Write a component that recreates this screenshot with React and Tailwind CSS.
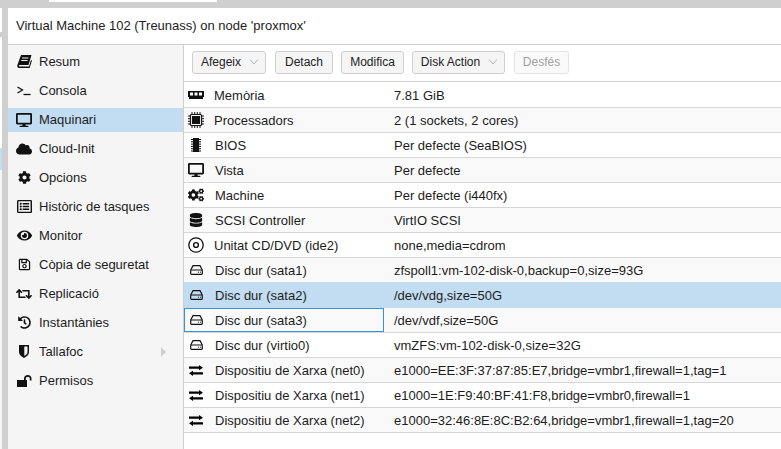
import React from 'react';
import {
  FaDesktop,
  FaCloud,
  FaCog,
  FaCogs,
  FaRegListAlt,
  FaEye,
  FaRegSave,
  FaRetweet,
  FaHistory,
  FaDatabase,
} from 'react-icons/fa';

const Chevron = () => (
  <svg width="10" height="6" viewBox="0 0 10 6" fill="none" stroke="#b5b5b5" strokeWidth="1">
    <path d="M1 0.5 L5 5 L9 0.5" />
  </svg>
);

const Book = () => (
  <svg width="15" height="13" viewBox="0 0 15 13" fill="#111">
    <path d="M4 0 H14.5 L11.5 10 H2.5 C1.8 10 1.8 11.5 2.6 11.5 H12 L14 5 L15 5.5 L12.6 13 H2 C0.5 13 0 11.5 0.4 10 Z" />
    <path d="M5.2 2.5 H11.5 L11.2 3.5 H4.9 Z M4.4 5 H10.7 L10.4 6 H4.1 Z" fill="#f5f5f5" />
  </svg>
);

const Terminal = () => (
  <svg width="14" height="11" viewBox="0 0 14 11" fill="none" stroke="#111" strokeWidth="1.3">
    <path d="M0.5 2 L5.5 5 L0.5 8" />
    <path d="M6.5 9.5 H13.5" />
  </svg>
);

const Shield = () => (
  <svg width="10" height="13" viewBox="0 0 10 13">
    <path d="M0 0 H10 V7 C10 10 7 12 5 13 C3 12 0 10 0 7 Z" fill="#111" />
    <path d="M5.3 1.5 H8.5 V7 C8.5 8.8 7 10.2 5.3 11 Z" fill="#f5f5f5" />
  </svg>
);

const Unlock = () => (
  <svg width="15" height="12" viewBox="0 0 15 12">
    <path d="M7 5 V3.5 C7 1.5 8.8 0 10.8 0 C12.8 0 14.5 1.5 14.5 3.5 V5.5 H12.8 V3.5 C12.8 2.4 11.9 1.7 10.8 1.7 C9.7 1.7 8.8 2.4 8.8 3.5 V5 H10 V12 H0 V5 Z" fill="#111" />
  </svg>
);

const Memory = () => (
  <svg width="16" height="8" viewBox="0 0 16 8">
    <path d="M0 0 H16 V6 H15 V8 H1 V6 H0 Z" fill="#111" />
    <path d="M2 1.5 H5 V4.5 H2 Z M6.5 1.5 H9.5 V4.5 H6.5 Z M11 1.5 H14 V4.5 H11 Z" fill="#fff" />
  </svg>
);

const Cpu = () => (
  <svg width="16" height="16" viewBox="0 0 16 16">
    <path
      d="M4 0 V16 M6.7 0 V16 M9.3 0 V16 M12 0 V16 M0 4 H16 M0 6.7 H16 M0 9.3 H16 M0 12 H16"
      stroke="#111"
      strokeWidth="1"
    />
    <rect x="2.5" y="2.5" width="11" height="11" rx="1" fill="#fff" stroke="#111" strokeWidth="1.2" />
    <rect x="4" y="4" width="8" height="8" fill="#111" />
  </svg>
);

const Chip = () => (
  <svg width="10" height="14" viewBox="0 0 10 14">
    <path d="M0 1.5 H10 M0 3.8 H10 M0 6.1 H10 M0 8.4 H10 M0 10.7 H10 M0 13 H10" stroke="#111" strokeWidth="1" />
    <rect x="2" y="0" width="6" height="14" fill="#111" />
  </svg>
);

const Disc = () => (
  <svg width="16" height="16" viewBox="0 0 16 16" fill="none" stroke="#111">
    <circle cx="8" cy="8" r="7.2" strokeWidth="1.3" />
    <circle cx="8" cy="8" r="2.4" strokeWidth="1.4" />
  </svg>
);

const Hdd = () => (
  <svg width="13" height="10" viewBox="0 0 13 10" fill="none" stroke="#111" strokeWidth="1.2">
    <path d="M0.7 5 L3 0.7 H10 L12.3 5" />
    <rect x="0.7" y="5" width="11.6" height="4.3" rx="0.8" />
    <path d="M8 7.2 H8.9 M10 7.2 H10.9" strokeWidth="1" />
  </svg>
);

const Exchange = () => (
  <svg width="14" height="11" viewBox="0 0 14 11" fill="#000">
    <path d="M0 1.5 H10 V0 L14 2.7 L10 5.2 V3.7 H0 Z" />
    <path d="M14 7.3 H4 V5.8 L0 8.3 L4 11 V9.5 H14 Z" />
  </svg>
);

const menu = [
  { label: 'Resum', icon: <Book /> },
  { label: 'Consola', icon: <Terminal /> },
  { label: 'Maquinari', icon: <FaDesktop size={16} />, active: true },
  { label: 'Cloud-Init', icon: <FaCloud size={16} /> },
  { label: 'Opcions', icon: <FaCog size={13} /> },
  { label: 'Històric de tasques', icon: <FaRegListAlt size={15} /> },
  { label: 'Monitor', icon: <FaEye size={15} /> },
  { label: 'Còpia de seguretat', icon: <FaRegSave size={13} /> },
  { label: 'Replicació', icon: <FaRetweet size={16} /> },
  { label: 'Instantànies', icon: <FaHistory size={13} /> },
  { label: 'Tallafoc', icon: <Shield />, arrow: true },
  { label: 'Permisos', icon: <Unlock /> },
];

const rows = [
  { name: 'Memòria', value: '7.81 GiB', icon: <Memory />, box: 'w-[26px]' },
  { name: 'Processadors', value: '2 (1 sockets, 2 cores)', icon: <Cpu />, box: 'w-[26px]' },
  { name: 'BIOS', value: 'Per defecte (SeaBIOS)', icon: <Chip />, box: 'w-[27px]' },
  { name: 'Vista', value: 'Per defecte', icon: <FaDesktop size={16} />, box: 'w-[27px]' },
  { name: 'Machine', value: 'Per defecte (i440fx)', icon: <FaCogs size={16} />, box: 'w-[27px]' },
  { name: 'SCSI Controller', value: 'VirtIO SCSI', icon: <FaDatabase size={14} />, box: 'w-[27px]' },
  { name: 'Unitat CD/DVD (ide2)', value: 'none,media=cdrom', icon: <Disc />, box: 'w-[26px]' },
  { name: 'Disc dur (sata1)', value: 'zfspoll1:vm-102-disk-0,backup=0,size=93G', icon: <Hdd />, box: 'w-[27px]' },
  { name: 'Disc dur (sata2)', value: '/dev/vdg,size=50G', icon: <Hdd />, box: 'w-[27px]', selected: true },
  { name: 'Disc dur (sata3)', value: '/dev/vdf,size=50G', icon: <Hdd />, box: 'w-[27px]', focused: true },
  { name: 'Disc dur (virtio0)', value: 'vmZFS:vm-102-disk-0,size=32G', icon: <Hdd />, box: 'w-[27px]' },
  { name: 'Dispositiu de Xarxa (net0)', value: 'e1000=EE:3F:37:87:85:E7,bridge=vmbr1,firewall=1,tag=1', icon: <Exchange />, box: 'w-[27px]' },
  { name: 'Dispositiu de Xarxa (net1)', value: 'e1000=1E:F9:40:BF:41:F8,bridge=vmbr0,firewall=1', icon: <Exchange />, box: 'w-[27px]' },
  { name: 'Dispositiu de Xarxa (net2)', value: 'e1000=32:46:8E:8C:B2:64,bridge=vmbr1,firewall=1,tag=20', icon: <Exchange />, box: 'w-[27px]' },
];

const ToolButton = ({ children, menuButton, disabled, className }) => (
  <button
    className={`flex h-[23px] items-center justify-center gap-[8px] rounded-[3px] border text-[12px] ${
      disabled ? 'border-[#e3e3e3] bg-[#fafafa] text-[#a0a0a0]' : 'border-[#cfcfcf] bg-[#f5f5f5] text-[#222]'
    } ${menuButton ? 'pl-[2px]' : ''} ${className}`}
  >
    {children}
    {menuButton && <Chevron />}
  </button>
);

const App = () => {
  return (
    <div className="flex h-[449px] w-[781px] flex-col overflow-hidden bg-[#cfcfcf] font-['Liberation_Sans',sans-serif] text-[13px] text-[#1c1c1c]">
      {/* Window behind the panel */}
      <div className="h-2 shrink-0">
        <div className="ml-[49px] h-[2px] w-[168px] bg-white" />
      </div>

      <div className="flex min-h-0 flex-1">
        {/* Tree edge on the far left */}
        <div className="w-2 shrink-0">
          <div className="flex h-full w-[2px] flex-col">
            <div className="h-6 bg-white" />
            <div className="h-[5px] bg-[#cfcfcf]" />
            <div className="h-[111px] bg-white" />
            <div className="h-[22px] bg-[#c2dcf2]" />
            <div className="flex-1 bg-[#f5f5f5]" />
          </div>
        </div>

        <div className="flex min-w-0 flex-1 flex-col bg-white">
          <div className="flex h-[37px] shrink-0 items-center border-b border-[#cfcfcf] pl-2 pb-px">
            Virtual Machine 102 (Treunass) on node 'proxmox'
          </div>

          <div className="flex min-h-0 flex-1">
            <nav className="flex w-[176px] shrink-0 flex-col gap-[5px] border-r border-[#cfcfcf] bg-[#f5f5f5] pt-[5px]">
              {menu.map((item) => (
                <div
                  key={item.label}
                  className={`flex h-6 items-center justify-between pr-[17px] ${item.active ? 'bg-[#c2dcf2]' : ''}`}
                >
                  <div className="flex items-center">
                    <span className="flex w-[31px] justify-center pl-[1px] pb-[1px] text-[#111]">{item.icon}</span>
                    <span>{item.label}</span>
                  </div>
                  {item.arrow && <span className="h-0 w-0 border-y-[5px] border-l-[5px] border-y-transparent border-l-[#cfcfcf]" />}
                </div>
              ))}
            </nav>

            <div className="flex min-w-0 flex-1 flex-col">
              <div className="flex h-[37px] shrink-0 items-center border-b border-[#cfcfcf] pl-2 pb-[2px]">
                <ToolButton menuButton className="w-[74px]">Afegeix</ToolButton>
                <ToolButton className="ml-[9px] w-[58px]">Detach</ToolButton>
                <ToolButton className="ml-2 w-[63px]">Modifica</ToolButton>
                <ToolButton menuButton className="ml-2 w-[93px]">Disk Action</ToolButton>
                <ToolButton disabled className="ml-[9px] w-[55px]">Desfés</ToolButton>
              </div>

              <div className="mt-px">
                {rows.map((row, i) => (
                  <div
                    key={row.name}
                    className={`flex h-[25px] items-center border-b ${
                      row.selected || rows[i + 1]?.selected ? 'border-[#c2dcf2]' : 'border-[#d6d6d6]'
                    } ${row.selected ? 'bg-[#c2dcf2]' : i % 2 ? 'bg-[#f9f9f9]' : 'bg-white'}`}
                  >
                    <div
                      className={`flex h-full w-[200px] items-center border pl-[3px] ${
                        row.focused ? 'border-[#3892d4]' : 'border-transparent'
                      }`}
                    >
                      <span className={`flex justify-start ${row.box}`}>
                        <span className="flex w-[16px] justify-center text-[#111]">{row.icon}</span>
                      </span>
                      <span className="whitespace-nowrap pt-px">{row.name}</span>
                    </div>
                    <span className="ml-[10px] whitespace-nowrap pt-px">{row.value}</span>
                  </div>
                ))}
              </div>
            </div>
          </div>
        </div>
      </div>
    </div>
  );
};

export default App;
